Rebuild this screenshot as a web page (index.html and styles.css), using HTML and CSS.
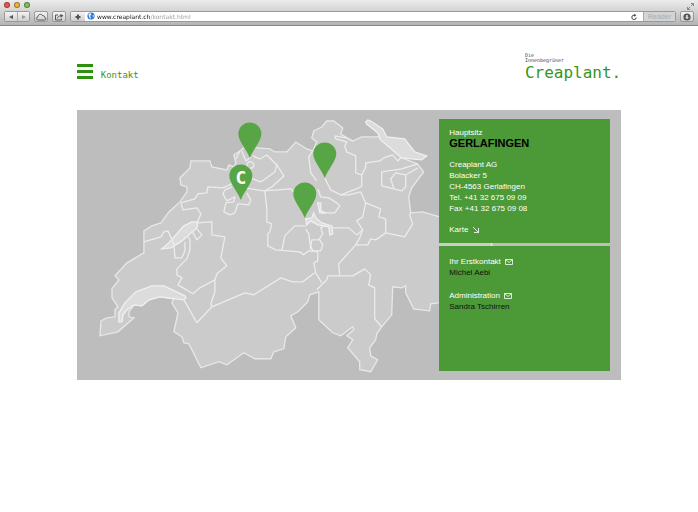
FILE: index.html
```html
<!DOCTYPE html>
<html lang="de">
<head>
<meta charset="utf-8">
<title>Creaplant – Kontakt</title>
<link rel="stylesheet" href="styles.css">
</head>
<body>
<div class="chrome">
  <div class="titlebar">
    <div class="lights">
      <button class="light red" aria-label="Schliessen"></button>
      <button class="light yellow" aria-label="Minimieren"></button>
      <button class="light green" aria-label="Zoomen"></button>
    </div>
    <button class="expand" aria-label="Vollbild"><svg viewBox="0 0 8 8"><path d="M4.500 .500h3v3M.500 4.500v3h3M7 1 4.600 3.400M1 7l2.400-2.400"/></svg></button>
  </div>
  <div class="toolbar">
    <div class="pair">
      <button class="tool" aria-label="Zurück"><svg viewBox="0 0 12 10"><path class="solid" d="M8 3v4L4 5z"/></svg></button>
      <button class="tool" aria-label="Vorwärts"><svg viewBox="0 0 12 10"><path class="solid dim" d="M4 3v4l4-2z"/></svg></button>
    </div>
    <button class="tool cloud" aria-label="iCloud"><svg viewBox="0 0 12 10"><path d="M3.200 8C.700 8 .800 5.200 2.800 5.100 2.800 2.300 6.300 1 7.700 3.800 9.500 3.500 9.900 4.800 9.700 5.500 11.500 5.800 11.300 8 9.500 8z"/></svg></button>
    <button class="tool share" aria-label="Teilen"><svg viewBox="0 0 12 10"><path d="M5 3H2.500v5h6V6.500M4.500 6.300C4.800 4.500 6 3.800 8 3.800"/><path class="solid" d="M7.500 1.800v4l3-2z"/></svg></button>
    <div class="address">
      <button class="tool add" aria-label="Lesezeichen hinzufügen"><svg viewBox="0 0 12 10"><path class="plus" d="M6 2.500v5M3.500 5h5"/></svg></button>
      <svg class="globe" viewBox="0 0 8 8"><circle cx="4" cy="4" r="3.600"/><path d="M1.500 2 3.500 1l1 1.500L3 4l1 1.500L3.500 7 2 5zM5.500 3l1.500.5L6 6z"/></svg>
      <input class="url" type="text" aria-label="Adresse" value="www.creaplant.ch/kontakt.html">
      <button class="reload" aria-label="Neu laden"><svg viewBox="0 0 8 8"><path d="M6.200 4.500A2.200 2.200 0 1 1 4.500 2.200"/><path class="solid" d="M4.200.700v3l2.200-1.500z"/></svg></button>
      <button class="tool reader">Reader</button>
    </div>
    <button class="tool download" aria-label="Downloads"><svg viewBox="0 0 12 10"><circle class="solid" cx="6" cy="5" r="3.600"/><path class="arrow" d="M5.200 3h1.600v2H8L6 7.200 4 5h1.200z"/></svg></button>
  </div>
</div>

<div class="page">
  <header class="header">
    <nav class="nav">
      <button class="burger" aria-label="Menü"><span></span><span></span><span></span></button>
      <h1 class="title">Kontakt</h1>
    </nav>
    <a class="logo" href="#"><span class="claim">Die<br>Innenbegrüner</span><span class="brand">Creaplant.</span></a>
  </header>

  <main class="stage">
    <svg class="map" viewBox="77 110 545 270" role="img" aria-label="Karte der Schweiz">
      <path class="land" d="M191 161H210L212 167 227 170 229 165 234 167 236 163 234 155 240 151 245 147 258 148 270 149 275 152 287 152 296 142 307 149 313 151 317 142 312 138 314 131 322 127 327 121H334L343 128 341 134 353 141 362 137H379L402 158 418 164 424 172 412 188 409 197 411 213 423 212 440 217 493 233 492 246 470 300 439 303 431 304 430 311 414 309 406 293V286L402 288 393 287 392 315 382 327 377 334 376 340 370 348 371 356 378 360 371 372 360 370V362L348 348 353 340 347 336 354 330 353 327 341 336 333 333 319 320V292L310 295 308 302 298 312 291 316 296 328 286 337 284 349 274 352 271 359H255L244 353 227 365 219 362 201 368 189 344 184 343 182 337 174 332 178 313 172 303 174 299 160 297 149 300 142 306 134 305 129 312V317L134 318 118 332 100 336 101 321 107 318 115 317V310L118 307 112 298V289L119 280 115 276 127 263 144 253V231L152 226 161 223 169 212 180 202 187 192V187L181 185 180 178 190 168Z"/>
      <g class="lake">
        <path d="M366 122 368 120 371 121 383 129 387 137 405 139 415 152 427 156 422 160 402 158 381 140 378 133 367 124Z"/>
        <path d="M186 298 184 300 160 297 149 300 142 306 134 305 127 310 123 315 122 322H119V313L125 303 136 292 152 286H164L185 296Z"/>
        <path d="M162 249 168 244 184 226 192 222H198L197 228 182 241 171 248Z"/>
        <path d="M306 219 312 218 314 213 316 218 322 223 332 226 333 234 330 235 329 227 318 225 311 221 307 225Z"/>
        <path d="M318 203H321V211L326 213 320 213Z"/>
      </g>
      <g class="border">
        <path d="M181 203 195 199 198 194 207 193 208 187 223 188 232 184 245 188 264 191 278 190 291 189 297 195 306 198"/>
        <path d="M181 203 183 210 197 208 201 214 197 223 212 222V235L225 237 221 258 227 266 217 274 215 280 200 288 193 294 185 289 178 285 182 278 177 275V269L187 259 190 250V239L187 236"/>
        <path d="M144 242 161 237 164 232 168 231 174 244 175 258H182L185 251V242M192 231 197 240 202 235 197 229"/>
        <path d="M184 300 197 323 212 307 245 293 254 295 281 278 293 282H303L315 273"/>
        <path d="M215 280V292L211 304 212 307M240 151 236 159M253 156 260 159 267 155 277 165 284 176 272 187 265 191 267 209V222L272 224 270 232 268 234V246L276 250 300 252 304 255 309 251 318 252"/>
        <path d="M277 165 275 172 261 182 250 178M232 187 225 190 223 194 227 201 235 197 234 202 226 203 224 212 230 215 235 213 238 204 249 205 251 200 247 193"/>
        <path d="M242 151 246 161 251 157M249 162A3 3 0 1 0 252 168 3 3 0 0 0 249 162"/>
        <path d="M313 151 309 157 311 173 317 181M318 189 321 197 329 198 337 203 340 206 335 213 322 213M335 136 347 138 353 141M335 136 336 139 347 142 345 146 347 152 356 156V173L362 175 362 186 359 188 341 195 331 190 325 178"/>
        <path d="M362 175 366 167 366 163 380 161 384 158 393 155 398 161 401 158M418 164 402 169 382 172V186L402 191 406 187V175L396 173 391 179 394 188M406 175 418 168"/>
        <path d="M341 195 349 195 361 192 366 203 363 217 357 221 363 230 357 235 349 228H332M366 203 381 209 379 217 386 219V233L405 237 413 224 410 215 411 213M386 233 376 240 371 239 368 245H356L339 264 340 276M363 230 360 238 356 245"/>
        <path d="M306 226H295L285 236 282 251M306 229 309 234 311 250M318 252V261L314 263 316 273 322 283M317 290 327 280 328 276H353L365 269 371 275 369 285 375 288V319L382 327"/>
        <path d="M312 240H320L323 245 321 251H313L311 246ZM319 240 323 234 321 228 326 225"/>
      </g>
      <g class="pin">
        <path id="pin" d="M250 158C247 150 238.500 141 238.500 134A11.500 11.500 0 0 1 261.500 134C261.500 141 253 150 250 158Z"/>
        <use href="#pin" x="-9" y="42"/>
        <use href="#pin" x="75" y="20"/>
        <use href="#pin" x="55" y="60"/>
        <text x="241" y="184">C</text>
      </g>
    </svg>

    <div class="panels">
      <section class="panel">
        <div><p>Hauptsitz</p><h2>GERLAFINGEN</h2></div>
        <address>Creaplant AG<br>Bolacker 5<br>CH-4563 Gerlafingen<br>Tel. +41 32 675 09 09<br>Fax +41 32 675 09 08</address>
        <a href="#">Karte <svg viewBox="0 0 8 8"><path d="M1 1l5.500 5.500M2 6.500h4.500V2"/></svg></a>
      </section>
      <section class="panel">
        <div><a href="#">Ihr Erstkontakt <svg viewBox="0 0 8 8"><path d="M.5 1.500h7v5h-7zl3.500 3 3.500-3"/></svg></a><p class="name">Michel Aebi</p></div>
        <div><a href="#">Administration <svg viewBox="0 0 8 8"><path d="M.5 1.500h7v5h-7zl3.500 3 3.500-3"/></svg></a><p class="name">Sandra Tschirren</p></div>
      </section>
    </div>
  </main>
</div>
</body>
</html>
```

FILE: styles.css
```css
* { box-sizing: border-box; }

body {
  margin: 0;
  background: #fff;
  font: 8px/11px "Liberation Sans", Arial, sans-serif;
}

h1, h2, p { margin: 0; }
a { color: inherit; text-decoration: none; }
button { margin: 0; padding: 0; border: 0; background: none; font: inherit; }
svg { display: block; fill: none; stroke: currentColor; }

/* Browser window */
.chrome {
  height: 26px;
  padding: 1px 4px 0;
  background: linear-gradient(#ececec, #b4b4b4);
  border-bottom: 1px solid #858585;
  color: #555;
}

.titlebar { display: flex; justify-content: space-between; height: 10px; }
.lights { display: flex; gap: 4px; padding: 1px 0 0; }
.light { width: 6px; height: 6px; border-radius: 50%; border: 1px solid #0005; }
.red { background: #ee5650; }
.yellow { background: #f3b13e; }
.green { background: #7cc455; }
.expand { color: #777; }
.expand svg { width: 7px; height: 7px; }

.toolbar { display: flex; gap: 4px; height: 11px; }
.pair, .address { display: flex; border: 1px solid #999; border-radius: 2px; }
.pair .tool, .address .tool { border: 0; border-radius: 0; }
.pair .tool + .tool { border-left: 1px solid #aaa; }
.tool {
  display: flex;
  align-items: center;
  justify-content: center;
  width: 14px;
  border: 1px solid #999;
  border-radius: 2px;
  background: linear-gradient(#f4f4f4, #cecece);
  color: #555;
}
.pair .tool { width: 12px; }
.tool svg { width: 12px; height: 10px; flex: none; }
.solid { fill: currentColor; stroke: none; }
.dim { opacity: .5; }
.plus { stroke-width: 2; }
.arrow { fill: #ddd; stroke: none; }

.address { flex: 1; align-items: stretch; background: #fff; }
.globe { width: 8px; height: 8px; margin: 0 2px; color: #fff; }
.globe circle { fill: #2c76d2; stroke: none; }
.globe path { fill: #e4f1ff; stroke: none; }
.url {
  flex: 1;
  min-width: 0;
  height: 9px;
  padding: 0;
  border: 0;
  outline: 0;
  font: 6px/9px "DejaVu Sans", sans-serif;
  color: transparent;
  background: linear-gradient(90deg, #111 53px, #999 53px);
  -webkit-background-clip: text;
  background-clip: text;
}
.reload { margin: 0 5px 0 0; color: #444; }
.reload svg { width: 8px; height: 8px; }
.address .reader {
  width: 32px;
  border-left: 1px solid #aaa;
  color: #aaa;
  background: #d4d4d4;
  font: 7px/9px "Liberation Sans", sans-serif;
}

/* Page */
.page { padding: 27px 11% 0; }

.header {
  display: flex;
  justify-content: space-between;
  align-items: flex-start;
  height: 57px;
  color: #369522;
  font-family: "DejaVu Sans Mono", monospace;
}

.nav { display: flex; gap: 8px; padding-top: 11px; }
.burger { display: grid; gap: 3px; width: 16px; align-content: start; }
.burger span { height: 3px; background: #2b910e; }
.title { padding-top: 6px; font-size: 9px; font-weight: 400; line-height: 11px; }

.logo { display: grid; }
.claim { color: #444; font-size: 5px; line-height: 5px; }
.brand { font-size: 16px; line-height: 19px; }

.stage { display: grid; background: #bdbdbd; }
.map { grid-area: 1 / 1; width: 100%; height: auto; }
.land { fill: #cbcbcb; stroke: #e8e8e8; stroke-width: 1.3; }
.lake { fill: #dcdcdc; stroke: #f0f0f0; stroke-width: 1.3; }
.border { stroke: #ececec; stroke-width: 1.3; stroke-linejoin: round; }
.pin { fill: #58a545; stroke: none; }
.pin text {
  fill: #fff;
  font: bold 18px "DejaVu Sans Mono", monospace;
  text-anchor: middle;
}

.panels {
  grid-area: 1 / 1;
  justify-self: end;
  display: grid;
  grid-template-rows: 1fr 1fr;
  gap: 3px;
  width: 182px;
  padding: 9px 11px 9px 0;
}
.panel {
  display: flex;
  flex-direction: column;
  gap: 10px;
  padding: 8px 10px;
  background: #4b9a37;
  color: #fff;
}
.panel h2 { color: #000; font-size: 11px; line-height: 11px; }
.panel address { font-style: normal; }
.panel a { display: flex; align-items: center; gap: 4px; }
.panel a svg { width: 8px; height: 8px; stroke-width: .8; }
.panel + .panel { gap: 12px; padding-top: 10px; }
.name { color: #111; }
```
